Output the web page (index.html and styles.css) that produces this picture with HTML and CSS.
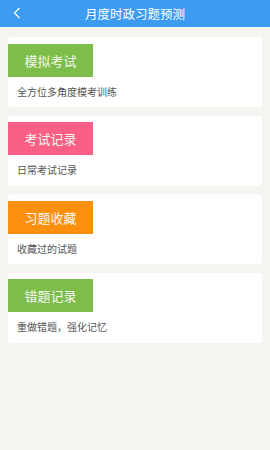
FILE: index.html
```html
<!DOCTYPE html>
<html lang="zh">
<head>
<meta charset="utf-8">
<link rel="stylesheet" href="styles.css">
</head>
<body>
<div class="page">
  <header class="topbar">
    <span class="back">
      <svg width="8" height="12" viewBox="0 0 8 12"><path d="M6.5 1 L1.5 6 L6.5 11" fill="none" stroke="#fff" stroke-width="1.2"/></svg>
    </span>
    <span class="title">月度时政习题预测</span>
  </header>
  <main class="list">
    <section class="card">
      <div class="tag green">模拟考试</div>
      <div class="desc">全方位多角度模考训练</div>
    </section>
    <section class="card">
      <div class="tag pink">考试记录</div>
      <div class="desc">日常考试记录</div>
    </section>
    <section class="card">
      <div class="tag orange">习题收藏</div>
      <div class="desc">收藏过的试题</div>
    </section>
    <section class="card">
      <div class="tag green">错题记录</div>
      <div class="desc">重做错题，强化记忆</div>
    </section>
  </main>
</div>
</body>
</html>
```

FILE: styles.css
```css
html, body {
  margin: 0;
  padding: 0;
}
body {
  width: 270px;
  height: 450px;
  overflow: hidden;
  font-family: "Noto Sans CJK SC", "Noto Sans", sans-serif;
  background: #f4f4f0;
}
.page {
  height: 450px;
  display: flex;
  flex-direction: column;
}
.topbar {
  height: 27px;
  background: #3d9cf2;
  display: flex;
  align-items: center;
  justify-content: center;
  position: relative;
  flex-shrink: 0;
}
.back {
  position: absolute;
  left: 13px;
  top: 7px;
  display: flex;
}
.title {
  color: #fff;
  font-size: 12.5px;
  line-height: 27px;
  letter-spacing: 0;
}
.list {
  padding: 10px 8px 0 8px;
  display: flex;
  flex-direction: column;
  gap: 8.5px;
}
.card {
  background: #fff;
  border-radius: 3px;
  height: 70px;
  box-sizing: border-box;
  padding-top: 6.5px;
}
.tag {
  width: 85px;
  height: 33px;
  display: flex;
  align-items: center;
  justify-content: center;
  color: #f4f8ee;
  font-size: 13px;
}
.green { background: #7dbd4a; }
.pink { background: #fb5f86; }
.orange { background: #fd8f0e; }
.desc {
  padding-left: 9px;
  margin-top: 8px;
  font-size: 10px;
  line-height: 14px;
  color: #555;
}
```
